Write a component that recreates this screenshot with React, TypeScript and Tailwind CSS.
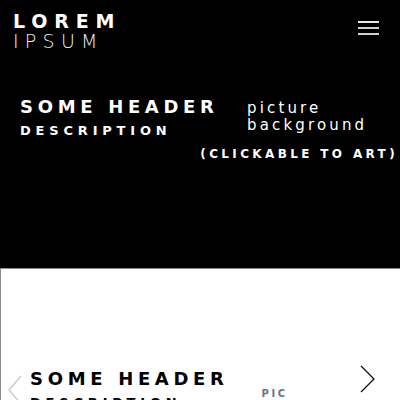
const FONT = { fontFamily: '"DejaVu Sans", "Liberation Sans", sans-serif' };

function Burger() {
  return (
    <button className="flex flex-col gap-[4px] pt-[9px]">
      <span className="block w-[21px] h-[2px] bg-[#e8e8e8]" />
      <span className="block w-[21px] h-[2px] bg-[#d0d0d0]" />
      <span className="block w-[21px] h-[2px] bg-[#d0d0d0]" />
    </button>
  );
}

export default function App() {
  return (
    <div className="w-[400px] h-[400px] overflow-hidden bg-white" style={FONT}>
      {/* Hero */}
      <section className="bg-black text-white h-[268px] flex flex-col">
        <header className="flex justify-between pl-[13px] pr-[21px] pt-[12px]">
          <div className="leading-none flex flex-col gap-[1px]">
            <div className="text-[19px] font-bold tracking-[0.36em]">LOREM</div>
            <div className="text-[19px] font-light tracking-[0.33em] text-[#ececec]">IPSUM</div>
          </div>
          <Burger />
        </header>

        <div className="flex pl-[20px] pt-[47px]">
          <div className="w-[227px] leading-none">
            <div className="text-[18px] font-bold tracking-[0.26em]">SOME HEADER</div>
            <div className="text-[13px] font-bold tracking-[0.37em] mt-[8px]">DESCRIPTION</div>
          </div>
          <div className="text-[15px] leading-[17px] tracking-[0.21em] pt-[2px]">
            <div>picture</div>
            <div>background</div>
          </div>
        </div>
        <div className="text-right pr-[2px] mt-[11px] text-[12px] font-bold tracking-[0.28em] leading-none">
          (CLICKABLE TO ART)
        </div>
      </section>

      {/* Slider */}
      <section className="border-t border-l border-[#8a8a8a] h-[200px] flex items-start pt-[101px]">
        <svg width="20" height="40" viewBox="0 0 20 40" className="ml-[5px] mt-[4px] shrink-0">
          <path d="M15 2 L3 16 L15 30" fill="none" stroke="#c8c8c8" strokeWidth="1.3" />
        </svg>
        <div className="ml-[4px] leading-none text-black">
          <div className="text-[18px] font-bold tracking-[0.26em]">SOME HEADER</div>
          <div className="text-[13px] font-bold tracking-[0.37em] mt-[8px]">DESCRIPTION</div>
        </div>
        <div className="ml-[33px] mt-[19px] text-[10px] leading-none font-bold tracking-[0.25em] text-gray-500">PIC</div>
        <svg width="20" height="30" viewBox="0 0 20 30" className="ml-auto mr-[22px] -mt-[5px] shrink-0">
          <path d="M3 1 L16 14 L3 27" fill="none" stroke="#111" strokeWidth="1.3" />
        </svg>
      </section>
    </div>
  );
}
